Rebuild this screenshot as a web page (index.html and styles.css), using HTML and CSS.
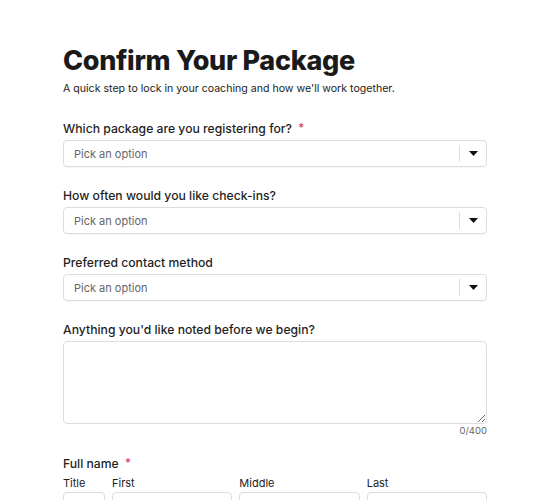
FILE: index.html
```html
<!DOCTYPE html>
<html lang="en">
<head>
  <meta charset="UTF-8" />
  <title>Confirm Your Package</title>
  <link rel="stylesheet" href="styles.css">
</head>
<body>
  <form class="form">
    <h1>Confirm Your Package</h1>
    <p class="lead">A quick step to lock in your coaching and how we'll work together.</p>

    <div class="field">
      <label class="label">Which package are you registering for? <span class="req">*</span></label>
      <div class="select">
        <span class="placeholder">Pick an option</span>
        <span class="caret"><svg width="9" height="5" viewBox="0 0 9 5"><path d="M0 0h9L4.5 5z" fill="#111"/></svg></span>
      </div>
    </div>

    <div class="field">
      <label class="label">How often would you like check-ins?</label>
      <div class="select">
        <span class="placeholder">Pick an option</span>
        <span class="caret"><svg width="9" height="5" viewBox="0 0 9 5"><path d="M0 0h9L4.5 5z" fill="#111"/></svg></span>
      </div>
    </div>

    <div class="field">
      <label class="label">Preferred contact method</label>
      <div class="select">
        <span class="placeholder">Pick an option</span>
        <span class="caret"><svg width="9" height="5" viewBox="0 0 9 5"><path d="M0 0h9L4.5 5z" fill="#111"/></svg></span>
      </div>
    </div>

    <div class="field">
      <label class="label">Anything you'd like noted before we begin?</label>
      <textarea class="notes"></textarea>
      <div class="count">0/400</div>
    </div>

    <div class="field name">
      <label class="label">Full name <span class="req">*</span></label>
      <div class="name-row">
        <div class="part title"><span class="sub">Title</span><input class="input" /></div>
        <div class="part"><span class="sub">First</span><input class="input" /></div>
        <div class="part"><span class="sub">Middle</span><input class="input" /></div>
        <div class="part"><span class="sub">Last</span><input class="input" /></div>
      </div>
    </div>
  </form>
</body>
</html>
```

FILE: styles.css
```css
body { margin: 0; font-family: Inter, "Noto Sans", sans-serif; color: #1a1a1a; background: #fff; }
.form { width: 424px; margin: 0 auto; padding-top: 43px; }
h1 { font-size: 27px; font-weight: 800; letter-spacing: -0.3px; margin: 0; line-height: 36px; }
.lead { font-size: 10.6px; margin: 3px 0 0; line-height: 14px; color: #222; }
.field { margin-top: 21px; }
.lead + .field { margin-top: 24px; }
.label { display: block; font-size: 12.2px; font-weight: 500; line-height: 16px; margin-bottom: 3px; color: #1f1f1f; }
.req { color: #e3306b; font-size: 11.5px; margin-left: 3px; vertical-align: 1px; }
.select { display: flex; align-items: center; box-sizing: border-box; height: 27px; border: 1px solid #dcdde2; border-radius: 4px; box-shadow: 0 1px 1px rgba(0,0,0,0.04); }
.placeholder { flex: 1; padding-left: 10px; font-size: 11px; color: #666; }
.caret { display: flex; align-items: center; justify-content: center; width: 26px; height: 17px; border-left: 1px solid #dcdde2; }
.notes { display: block; box-sizing: border-box; width: 100%; height: 83px; margin: 0; border: 1px solid #dcdde2; border-radius: 4px; resize: vertical; font-family: inherit; }
.count { text-align: right; font-size: 9.5px; color: #666; margin-top: 1px; line-height: 12px; }
.field.name { margin-top: 18px; }
.name-row { display: flex; gap: 7px; }
.part { flex: 1; min-width: 0; display: flex; flex-direction: column; }
.part.title { flex: 0 0 42px; }
.sub { font-size: 11px; line-height: 16px; margin-bottom: 1px; color: #222; }
.input { box-sizing: border-box; width: 100%; height: 27px; margin: 0; border: 1px solid #dcdde2; border-radius: 4px; }
```
